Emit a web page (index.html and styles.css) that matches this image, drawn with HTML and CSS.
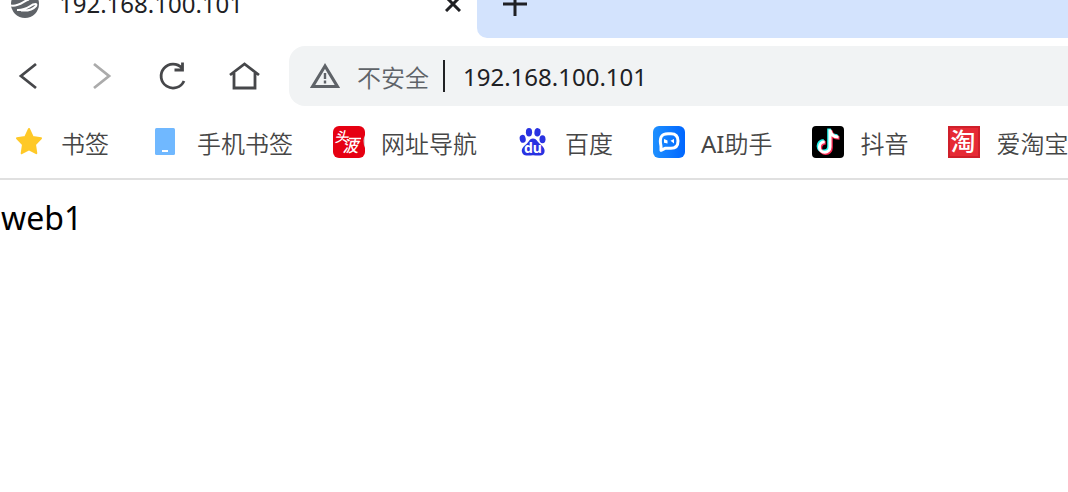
FILE: index.html
```html
<!DOCTYPE html>
<html lang="zh-CN">
<head>
    <meta charset="UTF-8">
    <meta name="viewport" content="width=device-width, initial-scale=1.0">
    <title>192.168.100.101</title>
    <link rel="stylesheet" href="styles.css">
</head>
<body>
    <header class="browser">
        <div class="tabs">
            <div class="tab">
                <svg class="tab-icon" viewBox="0 0 28 28" aria-hidden="true">
                    <circle cx="14" cy="14" r="14" fill="#5f6368"/>
                    <path d="M0 15.500C8 17 13 10.500 18 9.500M6 20C14 20.500 18 16.500 22 14.500C25 13.500 26 14 25 16C22 19.500 16 21 10 20.500" fill="none" stroke="#fff" stroke-width="2"/>
                </svg>
                <span class="tab-title">192.168.100.101</span>
                <button class="icon-button" type="button" aria-label="关闭标签页">
                    <svg width="16" height="16" viewBox="0 0 16 16"><path d="M1 1l14 14M15 1L1 15" stroke="#202124" stroke-width="3"/></svg>
                </button>
            </div>
            <div class="tab-rest">
                <button class="icon-button" type="button" aria-label="新建标签页">
                    <svg width="24" height="24" viewBox="0 0 24 24"><path d="M0 12h24M12 0v24" stroke="#202124" stroke-width="3"/></svg>
                </button>
            </div>
        </div>

        <div class="toolbar">
            <nav class="nav">
                <button class="icon-button" type="button" aria-label="后退">
                    <svg width="36" height="36" viewBox="0 0 36 36"><path d="M26 6L11 18l15 12" fill="none" stroke="#46474a" stroke-width="2.800"/></svg>
                </button>
                <button class="icon-button" type="button" aria-label="前进" disabled>
                    <svg width="36" height="36" viewBox="0 0 36 36"><path d="M12 6l15 12-15 12" fill="none" stroke="#ababab" stroke-width="2.800"/></svg>
                </button>
                <button class="icon-button" type="button" aria-label="刷新">
                    <svg width="36" height="36" viewBox="0 0 36 36"><path d="M30 23A12 12 0 1 1 28 10M28.500 4.500v7.500h-8" fill="none" stroke="#46474a" stroke-width="2.800"/></svg>
                </button>
                <button class="icon-button" type="button" aria-label="主页">
                    <svg width="36" height="36" viewBox="0 0 36 36"><path d="M4 17L18.500 6 33 17M8 15v15h21V15" fill="none" stroke="#46474a" stroke-width="2.800"/></svg>
                </button>
            </nav>
            <div class="address">
                <svg class="warning" viewBox="0 0 30 26" aria-hidden="true">
                    <path d="M15 3L2.500 23.600h25z" fill="none" stroke="#5f6368" stroke-width="3"/>
                    <path d="M15 10v6M15 17.500v3" stroke="#5f6368" stroke-width="2.400"/>
                </svg>
                <label class="security" for="url">不安全</label>
                <input class="url" id="url" type="text" value="192.168.100.101">
            </div>
        </div>

        <nav class="bookmarks">
            <a class="bookmark" href="#">
                <svg class="bookmark-icon" viewBox="0 0 32 32"><path d="M16 3l3.700 8 8.300 1.300-6 6.200 1.300 8.700L16 23.300l-7.300 3.900L10 18.500l-6-6.200L12.300 11z" fill="#ffc928" stroke="#ffc928" stroke-width="2" stroke-linejoin="round"/></svg>
                <span class="label">书签</span>
            </a>
            <a class="bookmark" href="#">
                <svg class="bookmark-icon" viewBox="0 0 32 32"><rect x="6" y="2" width="20" height="27" rx="1.500" fill="#70b8ff"/><path d="M13 25h6" stroke="#fff" stroke-width="2"/></svg>
                <span class="label">手机书签</span>
            </a>
            <a class="bookmark" href="#">
                <svg class="bookmark-icon" viewBox="0 0 32 32">
                    <rect width="32" height="32" rx="6" fill="#e60012"/>
                    <path d="M32 9q-3 6 0 13z" fill="#d8d8d8"/>
                    <g class="logo-text logo-text-thin" transform="skewX(-12)">
                        <text x="5" y="16" font-size="14">头</text>
                        <text x="15" y="26" font-size="16">波</text>
                    </g>
                    <path d="M16 12.500h12" stroke="#fff" stroke-width="1.500"/>
                </svg>
                <span class="label">网址导航</span>
            </a>
            <a class="bookmark" href="#">
                <svg class="bookmark-icon" viewBox="0 0 32 32">
                    <g fill="#2932e1">
                        <ellipse cx="12" cy="6.300" rx="3.100" ry="4.200"/>
                        <ellipse cx="20.500" cy="6.300" rx="3.100" ry="4.200" transform="rotate(8 20.500 6.300)"/>
                        <ellipse cx="5.700" cy="12.800" rx="3" ry="4" transform="rotate(-12 5.700 12.800)"/>
                        <ellipse cx="25.500" cy="13.200" rx="3" ry="4"/>
                        <path d="M16 12.500c3.500 0 4.500 3.500 7 5.500 3.500 3 5.200 5 4.500 8-1 4.500-6 3.700-11.500 3.300-5 .4-10 1-11-3.300-.8-3 1-5 4.500-8 2.300-2 3-5.500 6.500-5.500z"/>
                    </g>
                    <text class="logo-text" x="16" y="26.500" font-size="14" text-anchor="middle">du</text>
                </svg>
                <span class="label">百度</span>
            </a>
            <a class="bookmark" href="#">
                <svg class="bookmark-icon" viewBox="0 0 32 32">
                    <defs><linearGradient id="ai" x2="1"><stop stop-color="#1e90ff"/><stop offset="1" stop-color="#0066ff"/></linearGradient></defs>
                    <rect width="32" height="32" rx="6" fill="url(#ai)"/>
                    <path d="M15 7.700h3c4.500 0 7 2.600 7 7.300s-2.500 7.300-7 7.300h-6l-4 2v-4C6.200 12 8 7.700 15 7.700z" fill="none" stroke="#fff" stroke-width="3" stroke-linejoin="round"/>
                    <path d="M11 13l3.500 1.500v3l-3.500-.7zM21 13l-3.500 1.700L21 17.500" fill="#fff"/>
                </svg>
                <span class="label"><span class="latin">AI</span>助手</span>
            </a>
            <a class="bookmark" href="#">
                <svg class="bookmark-icon" viewBox="0 0 32 32">
                    <rect width="32" height="32" rx="4" fill="#000"/>
                    <g fill="none" stroke-width="3.600">
                        <path d="M17 2.500v17.500a5.300 5.300 0 1 1-5.300-5.300M17 3c.5 4 3 7 8.500 7" stroke="#25f4ee"/>
                        <path d="M19 4.500v17.500a5.300 5.300 0 1 1-5.300-5.300M19 5c.5 4 3 7 8.500 7" stroke="#fe2c55"/>
                        <path d="M18 3.500v17.500a5.300 5.300 0 1 1-5.300-5.300M18 4c.5 4 3 7 8.500 7" stroke="#fff" stroke-width="3"/>
                    </g>
                </svg>
                <span class="label">抖音</span>
            </a>
            <a class="bookmark" href="#">
                <svg class="bookmark-icon" viewBox="0 0 32 32">
                    <rect x="1" y="1" width="30" height="30" fill="#e62a35" stroke="#cf1f2a" stroke-width="2"/>
                    <text class="logo-text logo-text-thin" x="15" y="25" font-size="25" text-anchor="middle">淘</text>
                </svg>
                <span class="label">爱淘宝</span>
            </a>
        </nav>
    </header>

    <main class="page">web1</main>
</body>
</html>
```
FILE: styles.css
```css
* { box-sizing: border-box; }
body {
    margin: 0;
    background: #fff;
    color: #000;
    font-family: "Noto Sans", "Noto Sans CJK SC", sans-serif;
    font-size: 24px;
    overflow-x: hidden;
}
.icon-button {
    display: flex;
    padding: 0;
    border: none;
    background: none;
    cursor: pointer;
}
.browser {
    overflow: hidden;
    border-bottom: 2px solid #e0e0e0;
}

.tabs {
    display: flex;
    height: 68px;
    margin-top: -30px;
    background: #fff;
}
.tab {
    display: flex;
    align-items: center;
    width: 477px;
    padding: 0 16px 0 11px;
    color: #202124;
}
.tab-icon { width: 28px; height: 28px; margin-right: 20px; }
.tab-title { flex: 1; line-height: 32px; }
.tab-rest {
    display: flex;
    flex: 1;
    align-items: center;
    padding-left: 26px;
    border-bottom-left-radius: 10px;
    background: #d3e3fd;
}

.toolbar {
    display: flex;
    align-items: center;
    padding: 8px 0 8px 10px;
}
.nav { display: flex; gap: 36px; }
.address {
    display: flex;
    flex: 1;
    align-items: center;
    height: 60px;
    margin-left: 27px;
    padding-left: 21px;
    border-radius: 16px 0 0 16px;
    background: #f1f3f4;
}
.warning { width: 30px; height: 26px; }
.security {
    margin: 0 14px 0 17px;
    padding-top: 3px;
    color: #5f6368;
    font-weight: 350;
    line-height: 32px;
}
.url {
    flex: 1;
    min-width: 0;
    height: 32px;
    padding: 0 0 0 18px;
    border: none;
    border-left: 2px solid #202124;
    outline: none;
    background: none;
    color: #202124;
    font: inherit;
}

.bookmarks {
    display: flex;
    gap: 40px;
    padding: 10px 0 18px 13px;
    white-space: nowrap;
}
.bookmark {
    display: flex;
    flex-shrink: 0;
    align-items: center;
    gap: 16px;
    color: #464646;
    font-weight: 350;
    line-height: 33px;
    text-decoration: none;
}
.bookmark-icon { width: 32px; height: 32px; }
.label { padding-top: 3px; }
.latin { font-weight: 400; }
.logo-text {
    fill: #fff;
    font-family: "Noto Sans", "Noto Sans CJK SC", sans-serif;
    font-weight: bold;
}
.logo-text-thin { font-weight: 500; }

.page {
    padding: 16px 1px;
    font-size: 32px;
    line-height: 44px;
}
```
